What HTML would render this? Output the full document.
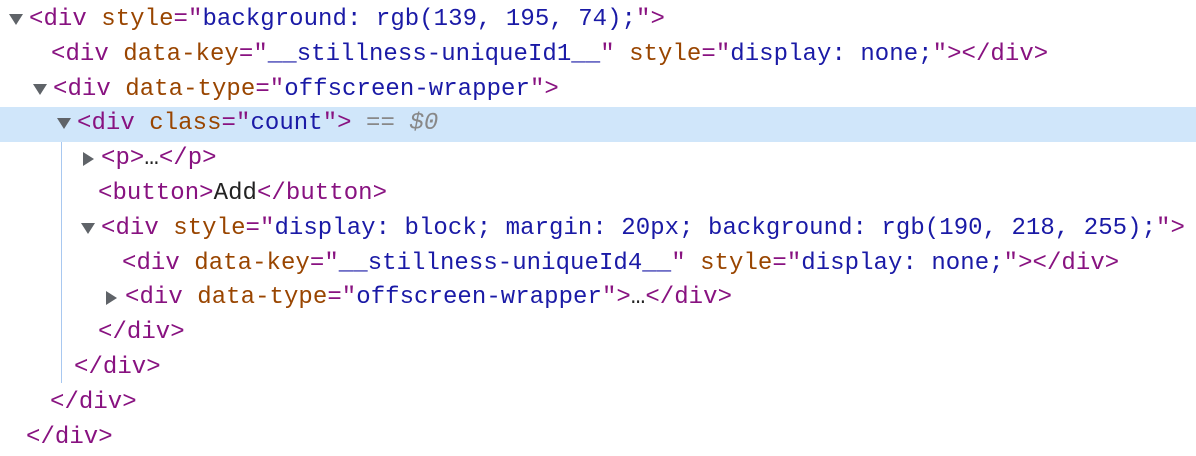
<!DOCTYPE html>
<html><head><style>
html,body{margin:0;padding:0;background:#fff;width:1196px;height:456px;overflow:hidden}
body{padding-top:3px;box-sizing:border-box}
.l{position:relative;height:34.8px;line-height:34.8px;font-family:"Liberation Mono","DejaVu Sans Mono",monospace;font-size:24px;white-space:pre;letter-spacing:0.05px}
.t{color:#881280}.a{color:#994500}.v{color:#1a1aa6}.x{color:#222}.g{color:#888}
.sel{background:#d0e6fa}
.tri{position:absolute;top:11px;width:0;height:0;border-left:7px solid transparent;border-right:7px solid transparent;border-top:11px solid #5f6368}
.tr{position:absolute;top:10px;width:0;height:0;border-top:7px solid transparent;border-bottom:7px solid transparent;border-left:11px solid #5f6368}
.vl{position:absolute;left:61px;top:141px;width:1px;height:242px;background:#a8c8f0}
</style></head><body>
<div class="vl"></div>
<div class="l" style="padding-left:29px"><span class="tri" style="left:9px"></span><span class="t">&lt;div </span><span class="a">style</span><span class="t">="</span><span class="v">background: rgb(139, 195, 74);</span><span class="t">"&gt;</span></div>
<div class="l" style="padding-left:51px"><span class="t">&lt;div </span><span class="a">data-key</span><span class="t">="</span><span class="v">__stillness-uniqueId1__</span><span class="t">" </span><span class="a">style</span><span class="t">="</span><span class="v">display: none;</span><span class="t">"&gt;&lt;/div&gt;</span></div>
<div class="l" style="padding-left:53px"><span class="tri" style="left:33px"></span><span class="t">&lt;div </span><span class="a">data-type</span><span class="t">="</span><span class="v">offscreen-wrapper</span><span class="t">"&gt;</span></div>
<div class="l sel" style="padding-left:77px"><span class="tri" style="left:57px"></span><span class="t">&lt;div </span><span class="a">class</span><span class="t">="</span><span class="v">count</span><span class="t">"&gt;</span><span class="g"> == <i>$0</i></span></div>
<div class="l" style="padding-left:101px"><span class="tr" style="left:83px"></span><span class="t">&lt;p&gt;</span><span class="x">…</span><span class="t">&lt;/p&gt;</span></div>
<div class="l" style="padding-left:98px"><span class="t">&lt;button&gt;</span><span class="x">Add</span><span class="t">&lt;/button&gt;</span></div>
<div class="l" style="padding-left:101px"><span class="tri" style="left:81px"></span><span class="t">&lt;div </span><span class="a">style</span><span class="t">="</span><span class="v">display: block; margin: 20px; background: rgb(190, 218, 255);</span><span class="t">"&gt;</span></div>
<div class="l" style="padding-left:122px"><span class="t">&lt;div </span><span class="a">data-key</span><span class="t">="</span><span class="v">__stillness-uniqueId4__</span><span class="t">" </span><span class="a">style</span><span class="t">="</span><span class="v">display: none;</span><span class="t">"&gt;&lt;/div&gt;</span></div>
<div class="l" style="padding-left:125px"><span class="tr" style="left:106px"></span><span class="t">&lt;div </span><span class="a">data-type</span><span class="t">="</span><span class="v">offscreen-wrapper</span><span class="t">"&gt;</span><span class="x">…</span><span class="t">&lt;/div&gt;</span></div>
<div class="l" style="padding-left:98px"><span class="t">&lt;/div&gt;</span></div>
<div class="l" style="padding-left:74px"><span class="t">&lt;/div&gt;</span></div>
<div class="l" style="padding-left:50px"><span class="t">&lt;/div&gt;</span></div>
<div class="l" style="padding-left:26px"><span class="t">&lt;/div&gt;</span></div>
</body></html>
